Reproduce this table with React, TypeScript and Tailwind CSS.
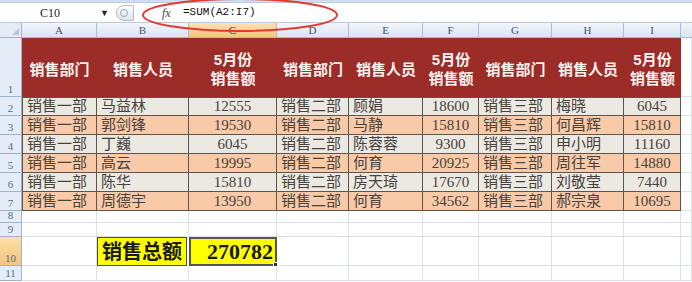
import React from 'react';

const cn = "font-['Liberation_Sans','Noto_Sans_CJK_SC',sans-serif]";
const num = "font-['Liberation_Serif','Noto_Sans_CJK_SC',serif]";

const cols = ['A', 'B', 'C', 'D', 'E', 'F', 'G', 'H', 'I'];

const rows: (string | number)[][] = [
  ['销售一部', '马益林', 12555, '销售二部', '顾娟', 18600, '销售三部', '梅晓', 6045],
  ['销售一部', '郭剑锋', 19530, '销售二部', '马静', 15810, '销售三部', '何昌辉', 15810],
  ['销售一部', '丁巍', 6045, '销售二部', '陈蓉蓉', 9300, '销售三部', '申小明', 11160],
  ['销售一部', '高云', 19995, '销售二部', '何育', 20925, '销售三部', '周往军', 14880],
  ['销售一部', '陈华', 15810, '销售二部', '房天琦', 17670, '销售三部', '刘敬莹', 7440],
  ['销售一部', '周德宇', 13950, '销售二部', '何育', 34562, '销售三部', '郝宗泉', 10695],
];

function RowNum({ n, active }: { n: number; active?: boolean }) {
  return (
    <div
      className={`flex items-end justify-center border-r border-b border-[#9fb3cc] text-[11px] leading-[13px] text-[#5a6a82] ${num} ${
        active ? 'bg-gradient-to-b from-[#fbe0a8] to-[#f4c57c] text-[#3d3d3d]' : 'bg-[#e4ecf7]'
      }`}
    >
      {n}
    </div>
  );
}

function Blank() {
  return <div className="border-r border-b border-[#dde2ea] bg-white" />;
}

export default function App() {
  const total = rows.reduce((s, r) => s + (r[2] as number) + (r[5] as number) + (r[8] as number), 0);

  return (
    <div className="relative w-[692px] h-[282px] overflow-hidden bg-white">
      {/* ribbon edge */}
      <div className="h-[3px] bg-gradient-to-b from-[#c6d7ee] to-[#dbe6f4] border-b border-[#b7c9e1]" />

      {/* formula bar */}
      <div className="flex items-center h-[20px] border-b border-[#b9cbe2] bg-white">
        <div className={`w-[100px] pl-[40px] text-[12px] text-[#222] ${num}`}>C10</div>
        <div className="w-[16px] text-[9px] text-[#222]">▼</div>
        <div className="w-[18px] h-[16px] rounded-l-full border border-[#b5bcc6] bg-gradient-to-b from-[#fbfcfd] to-[#dde3ea] flex items-center pl-[3px]">
          <div className="w-[8px] h-[8px] rounded-full border border-[#9aa6b4]" />
        </div>
        <div className="w-[28px]" />
        <div className={`w-[21px] italic text-[12px] text-[#444] ${num}`}>fx</div>
        <div className="text-[11px] text-[#111] font-['Liberation_Mono',monospace]">=SUM(A2:I7)</div>
      </div>

      {/* sheet */}
      <div className="grid grid-cols-[22px_75px_92px_88px_72px_74px_56px_73px_72px_57px_11px] grid-rows-[15px_59px_19px_19px_19px_19px_19px_19px_12px_14px_29px_15px]">
        {/* column headers */}
        <div className="relative bg-[#e4ebf5] border-r border-b border-[#9fb3cc]">
          <div className="absolute right-[2px] bottom-[2px] w-0 h-0 border-l-[7px] border-l-transparent border-b-[7px] border-b-[#b8c6d8]" />
        </div>
        {cols.map((c) => (
          <div
            key={c}
            className={`flex items-center justify-center border-r border-b border-[#a9bcd3] text-[11px] ${num} ${
              c === 'C'
                ? 'bg-gradient-to-b from-[#fbe3b0] to-[#f3c57e] text-[#333]'
                : 'bg-gradient-to-b from-[#f3f6fb] to-[#dbe4f0] text-[#44546c]'
            }`}
          >
            {c}
          </div>
        ))}
        <div className="bg-gradient-to-b from-[#f3f6fb] to-[#dbe4f0] border-b border-[#a9bcd3]" />

        {/* row 1: title row */}
        <RowNum n={1} />
        {cols.map((c, i) =>
          i % 3 === 2 ? (
            <div
              key={c}
              className={`flex flex-col items-center justify-center bg-[#9b2c27] text-[#fbf4f2] font-bold text-[15px] leading-[19px] pt-[2px] ${cn}`}
            >
              <span>5月份</span>
              <span>销售额</span>
            </div>
          ) : (
            <div
              key={c}
              className={`flex items-center justify-center bg-[#9b2c27] text-[#fbf4f2] font-bold text-[15px] pt-[6px] ${cn}`}
            >
              {i % 3 === 0 ? '销售部门' : '销售人员'}
            </div>
          )
        )}
        <Blank />

        {/* data rows */}
        {rows.map((r, ri) => (
          <React.Fragment key={ri}>
            <RowNum n={ri + 2} />
            {r.map((v, ci) => (
              <div
                key={ci}
                className={`flex items-center border-r border-b border-[#5e544e] text-[15px] text-[#47423e] ${
                  ri === 0 ? 'border-t' : ''
                } ${ci === 0 ? 'border-l' : ''} ${ri % 2 === 0 ? 'bg-[#ebe9e1]' : 'bg-[#f8caa7]'} ${
                  typeof v === 'number' ? `justify-center ${num}` : `pl-[4px] ${cn}`
                }`}
              >
                {v}
              </div>
            ))}
            <Blank />
          </React.Fragment>
        ))}

        {/* row 8, 9 */}
        {[8, 9].map((n) => (
          <React.Fragment key={n}>
            <RowNum n={n} />
            {Array.from({ length: 10 }).map((_, i) => (
              <Blank key={i} />
            ))}
          </React.Fragment>
        ))}

        {/* row 10: total */}
        <RowNum n={10} active />
        <Blank />
        <div
          className={`flex items-center justify-center bg-[#ffff00] border border-[#4a4a4a] mr-[2px] text-[20px] font-bold text-[#1a1a1a] ${cn}`}
        >
          销售总额
        </div>
        <div
          className={`relative flex items-center justify-end pr-[2px] bg-[#ffff00] border-2 border-[#55555c] text-[22px] font-bold text-[#1a1a1a] ${num}`}
        >
          {total}
          <div className="absolute -right-[3px] -bottom-[3px] w-[5px] h-[5px] bg-[#333] border border-white" />
        </div>
        {Array.from({ length: 7 }).map((_, i) => (
          <Blank key={i} />
        ))}

        {/* row 11 */}
        <RowNum n={11} />
        {Array.from({ length: 10 }).map((_, i) => (
          <Blank key={i} />
        ))}
      </div>

      {/* highlight circle around formula */}
      <svg className="absolute left-0 top-0 pointer-events-none" width="692" height="40">
        <ellipse cx="240" cy="15" rx="97" ry="16" fill="none" stroke="#e23a31" strokeWidth="2" />
      </svg>
    </div>
  );
}
